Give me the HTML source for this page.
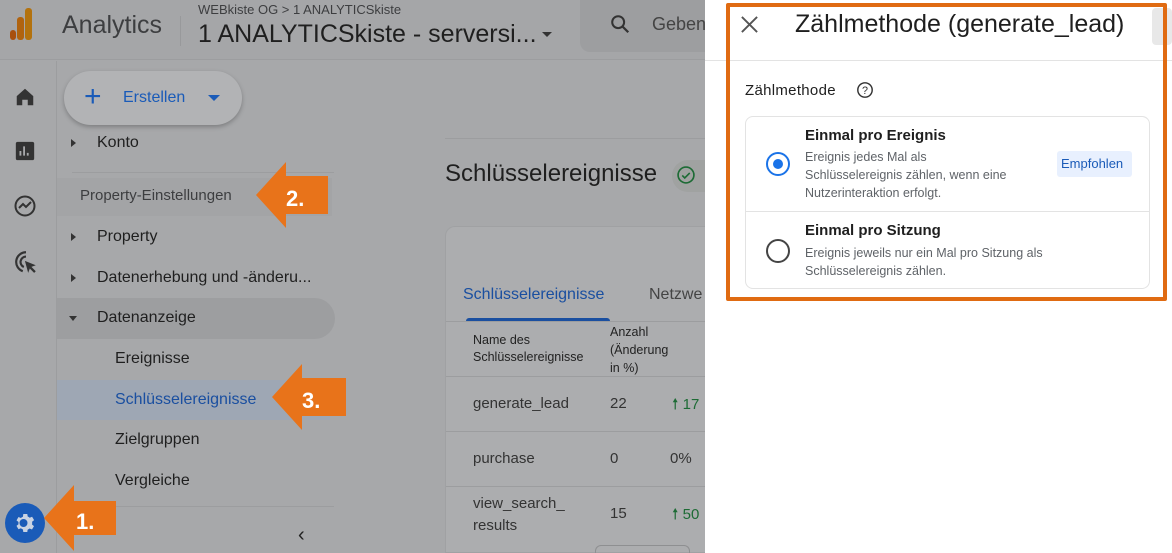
<!DOCTYPE html>
<html style="overflow:hidden;width:1172px;height:553px"><head><meta charset="utf-8"><style>
*{margin:0;padding:0;box-sizing:border-box}
body{width:1172px;height:553px;overflow:hidden;position:relative;background:#a7a8aa;font-family:"Liberation Sans",sans-serif;color:#1f1f1f}
.a{position:absolute;white-space:nowrap}
.arrow{position:absolute}
</style></head><body>
<!-- header -->
<div class="a" style="left:0;top:0;width:705px;height:60px;background:#a5a6a8;border-bottom:1px solid #9c9d9f"></div>
<div class="a" style="left:10px;top:30px;width:6px;height:10px;background:#a8500f;border-radius:3px"></div>
<div class="a" style="left:17px;top:17px;width:7px;height:23px;background:#b0630f;border-radius:3px"></div>
<div class="a" style="left:25px;top:8px;width:7px;height:32px;background:#b3720e;border-radius:3px"></div>
<div class="a" style="left:62px;top:11px;font-size:25px;color:#3d3e40">Analytics</div>
<div class="a" style="left:180px;top:16px;width:1px;height:30px;background:#98999b"></div>
<div class="a" style="left:198px;top:2px;font-size:13px;color:#3d3e40">WEBkiste OG &gt; 1 ANALYTICSkiste</div>
<div class="a" style="left:198px;top:20px;font-size:25px;color:#1f1f1f">1 ANALYTICSkiste - serversi...</div>
<div class="a" style="left:542px;top:32px;border:5px solid transparent;border-top:5px solid #333"></div>
<div class="a" style="left:580px;top:0;width:125px;height:52px;background:#9d9ea0;border-radius:0 0 0 10px"></div>
<svg class="a" style="left:609px;top:13px" width="22" height="22" viewBox="0 0 24 24"><circle cx="10" cy="10" r="6.5" fill="none" stroke="#333" stroke-width="2.2"/><path d="M15 15l6 6" stroke="#333" stroke-width="2.5"/></svg>
<div class="a" style="left:652px;top:14px;font-size:18px;color:#444">Geben</div>
<!-- left rail -->
<div class="a" style="left:56px;top:61px;width:1px;height:492px;background:#9c9d9f"></div>
<svg class="a" style="left:14px;top:86px" width="22" height="22" viewBox="0 0 24 24"><path d="M3 11L12 3l9 8v10h-6v-6h-6v6H3z" fill="#333"/></svg>
<svg class="a" style="left:14px;top:140px" width="22" height="22" viewBox="0 0 24 24"><rect x="2" y="2" width="20" height="20" rx="2" fill="#333"/><path d="M7 17v-5M11 17V7M15 17v-3" stroke="#a7a8aa" stroke-width="2"/></svg>
<svg class="a" style="left:13px;top:194px" width="24" height="24" viewBox="0 0 24 24"><circle cx="12" cy="12" r="9.5" fill="none" stroke="#333" stroke-width="2"/><path d="M6 14l4-4 3 3 5-5" fill="none" stroke="#333" stroke-width="2"/></svg>
<svg class="a" style="left:13px;top:249px" width="26" height="26" viewBox="0 0 24 24"><path d="M12 3a9 9 0 0 0-3 17.5M12 7a5 5 0 0 0-2 9.6" fill="none" stroke="#333" stroke-width="2"/><path d="M11 11l10 4-4 1.5 4 4-1.5 1.5-4-4L14 22z" fill="#333"/></svg>
<div class="a" style="left:5px;top:503px;width:40px;height:40px;border-radius:50%;background:#1a5bb8"></div>
<svg class="a" style="left:13px;top:511px" width="24" height="24" viewBox="0 0 24 24"><path d="M12 8a4 4 0 1 0 0 8 4 4 0 0 0 0-8zm8.5 5.5l2 1.6-2 3.4-2.4-1a8 8 0 0 1-2 1.2L15.8 21h-4l-.4-2.5a8 8 0 0 1-2-1.2l-2.4 1-2-3.4 2-1.6a8 8 0 0 1 0-2.3l-2-1.6 2-3.4 2.4 1a8 8 0 0 1 2-1.2L11.8 3h4l.4 2.5a8 8 0 0 1 2 1.2l2.4-1 2 3.4-2 1.6a8 8 0 0 1 0 2.3z" fill="#c9d3e3" transform="translate(-1.5 0)"/><circle cx="10.5" cy="12" r="2.6" fill="#1a5bb8"/></svg>
<!-- nav -->
<div class="a" style="left:64px;top:71px;width:178px;height:54px;border-radius:27px;background:#b2b3b5;box-shadow:0 2px 5px rgba(0,0,0,.25)"></div>
<div class="a" style="left:84px;top:82px;font-size:30px;color:#1a5bb8;line-height:30px">+</div>
<div class="a" style="left:123px;top:89px;font-size:16px;color:#1a5bb8">Erstellen</div>
<div class="a" style="left:208px;top:95px;border:6px solid transparent;border-top:6px solid #1a5bb8"></div>
<div class="a" style="left:71px;top:139px;border:4px solid transparent;border-left:5px solid #333"></div>
<div class="a" style="left:97px;top:134px;font-size:16px">Konto</div>
<div class="a" style="left:72px;top:172px;width:262px;height:1px;background:#9c9d9f"></div>
<div class="a" style="left:57px;top:178px;width:275px;height:38px;background:#a3a4a6"></div>
<div class="a" style="left:80px;top:187px;font-size:15px;color:#3d3e40">Property-Einstellungen</div>
<div class="a" style="left:71px;top:233px;border:4px solid transparent;border-left:5px solid #333"></div>
<div class="a" style="left:97px;top:228px;font-size:16px">Property</div>
<div class="a" style="left:71px;top:274px;border:4px solid transparent;border-left:5px solid #333"></div>
<div class="a" style="left:97px;top:269px;font-size:16px">Datenerhebung und -änderu...</div>
<div class="a" style="left:57px;top:298px;width:278px;height:41px;background:#9d9ea0;border-radius:0 21px 21px 0"></div>
<div class="a" style="left:69px;top:316px;border:4px solid transparent;border-top:5px solid #333"></div>
<div class="a" style="left:97px;top:309px;font-size:16px">Datenanzeige</div>
<div class="a" style="left:115px;top:350px;font-size:16px">Ereignisse</div>
<div class="a" style="left:57px;top:380px;width:273px;height:40px;background:#9ea7b4"></div>
<div class="a" style="left:115px;top:391px;font-size:16px;color:#1a4fa0">Schlüsselereignisse</div>
<div class="a" style="left:115px;top:431px;font-size:16px">Zielgruppen</div>
<div class="a" style="left:115px;top:472px;font-size:16px">Vergleiche</div>
<div class="a" style="left:72px;top:506px;width:262px;height:1px;background:#9c9d9f"></div>
<div class="a" style="left:298px;top:524px;font-size:20px;color:#222">‹</div>
<!-- main -->
<div class="a" style="left:445px;top:138px;width:260px;height:1px;background:#9c9d9f"></div>
<div class="a" style="left:445px;top:160px;font-size:24px;color:#1f1f1f">Schlüsselereignisse</div>
<div class="a" style="left:672px;top:160px;width:33px;height:32px;border-radius:16px 0 0 16px;background:#a0a2a1"></div>
<svg class="a" style="left:676px;top:165px" width="20" height="20" viewBox="0 0 24 24"><circle cx="12" cy="12" r="9.5" fill="none" stroke="#1d6b35" stroke-width="2"/><path d="M7.5 12.5l3 3 6-6" fill="none" stroke="#1d6b35" stroke-width="2"/></svg>
<div class="a" style="left:445px;top:226px;width:260px;height:327px;background:#acadaf;border:1px solid #a0a1a3;border-right:none;border-radius:10px 0 0 0"></div>
<div class="a" style="left:463px;top:286px;font-size:16px;color:#1a4fa0">Schlüsselereignisse</div>
<div class="a" style="left:649px;top:286px;font-size:16px;color:#444">Netzwe</div>
<div class="a" style="left:466px;top:318px;width:144px;height:4px;background:#1a4fa0;border-radius:3px 3px 0 0"></div>
<div class="a" style="left:446px;top:321px;width:259px;height:1px;background:#9c9d9f"></div>
<div class="a" style="left:473px;top:332px;font-size:12.5px;line-height:17px;color:#222">Name des<br>Schlüsselereignisse</div>
<div class="a" style="left:610px;top:323px;font-size:12.5px;line-height:18px;color:#222">Anzahl<br>(Änderung<br>in %)</div>
<div class="a" style="left:446px;top:376px;width:259px;height:1px;background:#9c9d9f"></div>
<div class="a" style="left:473px;top:395px;font-size:15px;color:#333">generate_lead</div>
<div class="a" style="left:610px;top:395px;font-size:15px;color:#333">22</div>
<div class="a" style="left:672px;top:394px;font-size:15px;color:#1d6b35">🠕 17</div>
<div class="a" style="left:446px;top:431px;width:259px;height:1px;background:#9c9d9f"></div>
<div class="a" style="left:473px;top:450px;font-size:15px;color:#333">purchase</div>
<div class="a" style="left:610px;top:450px;font-size:15px;color:#333">0</div>
<div class="a" style="left:670px;top:450px;font-size:15px;color:#333">0%</div>
<div class="a" style="left:446px;top:486px;width:259px;height:1px;background:#9c9d9f"></div>
<div class="a" style="left:473px;top:493px;font-size:15px;line-height:22px;color:#333">view_search_<br>results</div>
<div class="a" style="left:610px;top:505px;font-size:15px;color:#333">15</div>
<div class="a" style="left:672px;top:504px;font-size:15px;color:#1d6b35">🠕 50</div>
<div class="a" style="left:595px;top:545px;width:95px;height:8px;border:1px solid #8e8f91;border-bottom:none;border-radius:6px 6px 0 0"></div>
<!-- arrows -->
<svg class="arrow" style="left:256px;top:162px" width="74" height="66" viewBox="0 0 74 66"><path d="M0 33L30 0v14h42v38H30v14z" fill="#e8731a"/><text x="30" y="44" font-family="Liberation Sans" font-weight="bold" font-size="22" fill="#fff">2.</text></svg>
<svg class="arrow" style="left:272px;top:364px" width="74" height="66" viewBox="0 0 74 66"><path d="M0 33L30 0v14h44v38H30v14z" fill="#e8731a"/><text x="30" y="44" font-family="Liberation Sans" font-weight="bold" font-size="22" fill="#fff">3.</text></svg>
<svg class="arrow" style="left:44px;top:485px" width="74" height="66" viewBox="0 0 74 66"><path d="M0 33L30 0v16h42v34H30v16z" fill="#e8731a"/><text x="32" y="44" font-family="Liberation Sans" font-weight="bold" font-size="22" fill="#fff">1.</text></svg>
<!-- right panel -->
<div class="a" style="left:705px;top:0;width:467px;height:553px;background:#fff"></div>
<div class="a" style="left:705px;top:60px;width:467px;height:1px;background:#e3e3e3"></div>
<div class="a" style="left:1152px;top:8px;width:20px;height:37px;background:#e8e8e8;border-radius:4px"></div>
<div class="a" style="left:726px;top:3px;width:441px;height:298px;border:4px solid #e06b12;border-radius:2px"></div>
<svg class="a" style="left:740px;top:15px" width="19" height="19" viewBox="0 0 20 20"><path d="M2 2l16 16M18 2L2 18" stroke="#555" stroke-width="2"/></svg>
<div class="a" style="left:795px;top:10px;font-size:25px;color:#1f1f1f">Zählmethode (generate_lead)</div>
<div class="a" style="left:745px;top:82px;font-size:15px;color:#1f1f1f;letter-spacing:.3px">Zählmethode</div>
<svg class="a" style="left:856px;top:81px" width="18" height="18" viewBox="0 0 20 20"><circle cx="10" cy="10" r="8" fill="none" stroke="#333" stroke-width="1.6"/><text x="10" y="14.5" text-anchor="middle" font-family="Liberation Sans" font-size="12" fill="#333">?</text></svg>
<div class="a" style="left:745px;top:116px;width:405px;height:173px;border:1px solid #e3e3e3;border-radius:8px"></div>
<div class="a" style="left:746px;top:211px;width:403px;height:1px;background:#e3e3e3"></div>
<div class="a" style="left:766px;top:152px;width:24px;height:24px;border:2.5px solid #1a73e8;border-radius:50%"></div>
<div class="a" style="left:773px;top:159px;width:10px;height:10px;background:#1a73e8;border-radius:50%"></div>
<div class="a" style="left:805px;top:127px;font-size:15px;font-weight:bold;color:#1f1f1f">Einmal pro Ereignis</div>
<div class="a" style="left:805px;top:148px;font-size:12.5px;line-height:18px;color:#5f6368">Ereignis jedes Mal als<br>Schlüsselereignis zählen, wenn eine<br>Nutzerinteraktion erfolgt.</div>
<div class="a" style="left:1057px;top:151px;width:75px;height:26px;background:#e8f0fe;border-radius:3px"></div>
<div class="a" style="left:1061px;top:156px;font-size:13px;color:#1a5bb8">Empfohlen</div>
<div class="a" style="left:766px;top:239px;width:24px;height:24px;border:2px solid #444;border-radius:50%"></div>
<div class="a" style="left:805px;top:222px;font-size:15px;font-weight:bold;color:#1f1f1f">Einmal pro Sitzung</div>
<div class="a" style="left:805px;top:244px;font-size:12.5px;line-height:18px;color:#5f6368">Ereignis jeweils nur ein Mal pro Sitzung als<br>Schlüsselereignis zählen.</div>
</body></html>
